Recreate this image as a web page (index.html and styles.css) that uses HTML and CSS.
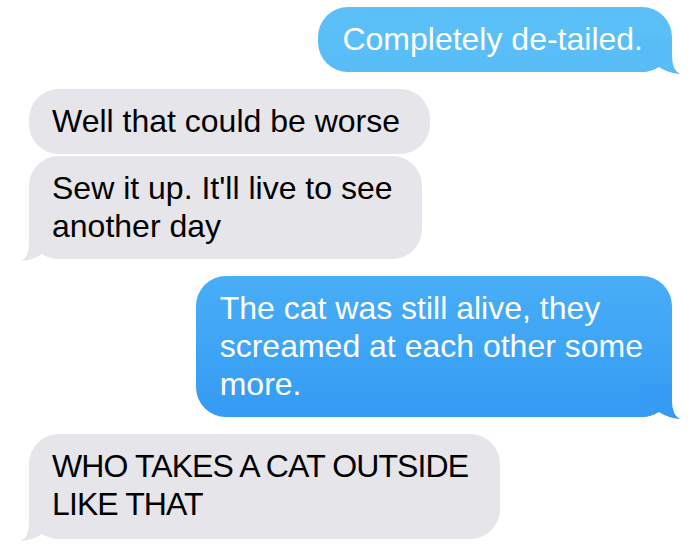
FILE: index.html
```html
<!DOCTYPE html>
<html lang="en">
<head>
<meta charset="utf-8">
<title>Messages</title>
<link rel="stylesheet" href="styles.css">
</head>
<body>
<main class="thread">
  <div class="msg sent light">
    Completely de-tailed.
    <svg class="tail" viewBox="0 0 42 36" width="42" height="36" aria-hidden="true"><path d="M0,0 H32 V17 Q32,31 40,35 Q28,34 19,28 Q10,33 0,33 Z"/></svg>
  </div>
  <div class="msg recv">Well that could be worse</div>
  <div class="msg recv cont">
    Sew it up. It'll live to see<br>another day
    <svg class="tail" viewBox="0 0 42 36" width="42" height="36" aria-hidden="true"><path d="M0,0 H32 V17 Q32,31 40,35 Q28,34 19,28 Q10,33 0,33 Z"/></svg>
  </div>
  <div class="msg sent deep">
    The cat was still alive, they<br>screamed at each other some<br>more.
    <svg class="tail" viewBox="0 0 42 36" width="42" height="36" aria-hidden="true"><path d="M0,0 H32 V17 Q32,31 40,35 Q28,34 19,28 Q10,33 0,33 Z"/></svg>
  </div>
  <div class="msg recv caps">
    WHO TAKES A CAT OUTSIDE<br>LIKE THAT
    <svg class="tail" viewBox="0 0 42 36" width="42" height="36" aria-hidden="true"><path d="M0,0 H32 V17 Q32,31 40,35 Q28,34 19,28 Q10,33 0,33 Z"/></svg>
  </div>
</main>
</body>
</html>
```

FILE: styles.css
```css
html, body {
  margin: 0;
  padding: 0;
  background: #ffffff;
}

body {
  font-family: "Liberation Sans", Arial, sans-serif;
  width: 700px;
  height: 550px;
  overflow: hidden;
}

.thread {
  display: flex;
  flex-direction: column;
  padding: 7px 28px 0 29px;
}

.msg {
  position: relative;
  z-index: 0;
  padding: 13px 30px 14px 23px;
  border-radius: 30px;
  font-size: 32px;
  line-height: 38px;
  white-space: nowrap;
}

.msg + .msg {
  margin-top: 17px;
}

.msg.cont {
  margin-top: 2px;
}

.sent {
  align-self: flex-end;
  color: #ffffff;
  padding-left: 24px;
  padding-right: 29px;
}

.sent.light {
  background: linear-gradient(#5cc0f8, #58bcf7);
  fill: #58bcf7;
}

.sent.deep {
  background: linear-gradient(#48aef7, #359bf3);
  fill: #359bf3;
}

.recv {
  align-self: flex-start;
  background: #e5e5ea;
  color: #000000;
  fill: #e5e5ea;
}

.caps {
  letter-spacing: -0.9px;
  padding-right: 32px;
  padding-bottom: 16px;
}

.tail {
  position: absolute;
  z-index: -1;
  bottom: -3px;
  display: block;
}

.sent .tail {
  right: -10px;
}

.recv .tail {
  left: -10px;
  transform: scaleX(-1);
}
```
